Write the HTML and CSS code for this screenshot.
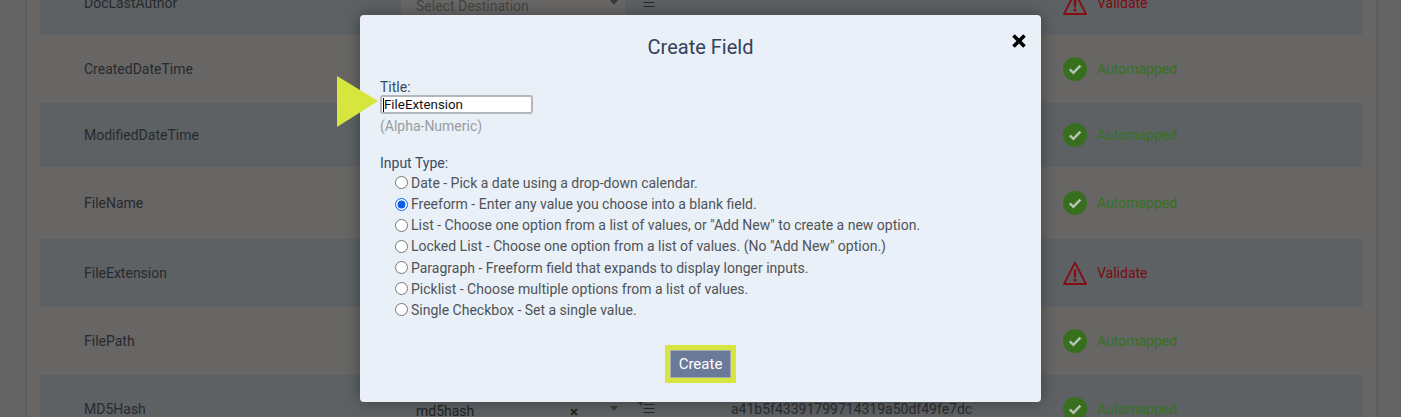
FILE: index.html
```html
<!DOCTYPE html>
<html lang="en">
<head>
  <meta charset="UTF-8">
  <title>Create Field</title>
  <link rel="stylesheet" href="styles.css">
</head>
<body>
  <svg class="defs" width="0" height="0">
    <symbol id="ok" viewBox="0 0 24 24">
      <circle cx="12" cy="12" r="12" fill="#376f1f"/>
      <path d="M6.800 12.400l3.600 3.400 7-7.200" fill="none" stroke="#b9c4b4" stroke-width="2.400"/>
    </symbol>
    <symbol id="warn" viewBox="0 0 24 24">
      <path d="M12 1.600L1 23h22z" fill="none" stroke="#850c11" stroke-width="1.800" stroke-linejoin="round"/>
      <path d="M10.600 8.500h2.800l-.5 8h-1.800z" fill="#850c11"/>
      <rect x="10.600" y="17.800" width="2.800" height="2.600" fill="#850c11"/>
    </symbol>
    <symbol id="addlist" viewBox="0 0 17 14">
      <path d="M0 3h5M2.500 .5v5M5.500 4.500h11M5.500 8.500h11M5.500 12.500h11" fill="none" stroke="#26292c" stroke-width="1.200"/>
    </symbol>
  </svg>

  <div class="panel">
    <div class="row tint row-first">
      <div class="name">DocLastAuthor</div>
      <div class="dest empty">Select Destination<span class="arrow"></span></div>
      <div class="value"><svg class="addlist"><use href="#addlist"/></svg></div>
      <div class="status bad"><svg class="status-icon"><use href="#warn"/></svg>Validate</div>
    </div>
    <div class="row r68">
      <div class="name">CreatedDateTime</div>
      <div class="dest"></div>
      <div class="value"></div>
      <div class="status good"><svg class="status-icon"><use href="#ok"/></svg>Automapped</div>
    </div>
    <div class="row tint r64">
      <div class="name">ModifiedDateTime</div>
      <div class="dest"></div>
      <div class="value"></div>
      <div class="status good"><svg class="status-icon"><use href="#ok"/></svg>Automapped</div>
    </div>
    <div class="row r72">
      <div class="name">FileName</div>
      <div class="dest"></div>
      <div class="value"></div>
      <div class="status good"><svg class="status-icon"><use href="#ok"/></svg>Automapped</div>
    </div>
    <div class="row tint r68">
      <div class="name">FileExtension</div>
      <div class="dest"></div>
      <div class="value"></div>
      <div class="status bad"><svg class="status-icon"><use href="#warn"/></svg>Validate</div>
    </div>
    <div class="row r68">
      <div class="name">FilePath</div>
      <div class="dest"></div>
      <div class="value"></div>
      <div class="status good"><svg class="status-icon"><use href="#ok"/></svg>Automapped</div>
    </div>
    <div class="row tint r68">
      <div class="name">MD5Hash</div>
      <div class="dest filled">md5hash<span class="clear">×</span><span class="arrow"></span></div>
      <div class="value"><svg class="addlist"><use href="#addlist"/></svg><span class="hash">a41b5f43391799714319a50df49fe7dc</span></div>
      <div class="status good"><svg class="status-icon"><use href="#ok"/></svg>Automapped</div>
    </div>
  </div>

  <div class="modal">
    <svg class="pointer" width="41" height="51" viewBox="0 0 41 51"><polygon points="0,0 41,25 0,51" fill="#d6e63e"/></svg>
    <svg class="close" width="16" height="16" viewBox="0 0 16 16"><path d="M2.500 2.500l11 11M13.500 2.500l-11 11" stroke="#000" stroke-width="3.600"/></svg>
    <h2 class="modal-title">Create Field</h2>
    <label class="field-label" for="title">Title:</label>
    <div class="title-box">
      <input id="title" class="title-input" type="text" value="FileExtension">
    </div>
    <p class="hint">(Alpha-Numeric)</p>
    <p class="field-label type-label">Input Type:</p>
    <div class="types">
      <label class="type"><input type="radio" name="type">Date - Pick a date using a drop-down calendar.</label>
      <label class="type"><input type="radio" name="type" checked>Freeform - Enter any value you choose into a blank field.</label>
      <label class="type"><input type="radio" name="type">List - Choose one option from a list of values, or "Add New" to create a new option.</label>
      <label class="type"><input type="radio" name="type">Locked List - Choose one option from a list of values. (No "Add New" option.)</label>
      <label class="type"><input type="radio" name="type">Paragraph - Freeform field that expands to display longer inputs.</label>
      <label class="type"><input type="radio" name="type">Picklist - Choose multiple options from a list of values.</label>
      <label class="type"><input type="radio" name="type">Single Checkbox - Set a single value.</label>
    </div>
    <div class="actions"><button class="create" type="button">Create</button></div>
  </div>
</body>
</html>
```

FILE: styles.css
```css
/* Page behind the dialog is drawn already dimmed */
html, body {
  height: 417px;
  overflow: hidden;
}

body {
  margin: 0;
  background: #646464;
  font-family: Roboto, "Liberation Sans", sans-serif;
  font-size: 14px;
  color: #27292d;
}

.defs {
  position: absolute;
}

.panel {
  margin: 0 25px 0 27px;
  padding: 0 14px 0 13px;
  height: 417px;
  overflow: hidden;
  background: #676665;
  box-shadow: 0 0 3px rgba(0, 0, 0, 0.2);
}

.row {
  display: grid;
  grid-template-columns: 361px 224px 438px 1fr;
  align-items: center;
}

.tint {
  background: #5d6164;
}

.row-first {
  height: 64px;
  margin-top: -29px;
}

.r64 { height: 64px; }
.r68 { height: 68px; }
.r72 { height: 72px; }

.name {
  padding-left: 44px;
}

.dest {
  position: relative;
  display: flex;
  align-items: center;
  box-sizing: border-box;
  height: 30px;
  padding-left: 15px;
}

.dest.empty {
  padding-top: 6px;
  background: #6a6866;
  color: #444;
}

.dest.filled {
  padding-top: 4px;
  color: #222;
}

.arrow {
  position: absolute;
  right: 7px;
  top: 12px;
  border-left: 4.500px solid transparent;
  border-right: 4.500px solid transparent;
  border-top: 5px solid #3a3a3a;
}

.clear {
  position: absolute;
  left: 169px;
  top: 9px;
  font-size: 15px;
  font-weight: 700;
}

.value {
  display: flex;
  align-items: center;
  height: 30px;
  padding-left: 13px;
}

.addlist {
  width: 17px;
  height: 14px;
  margin-top: -4px;
}

.hash {
  margin-left: 76px;
  color: #2a2c30;
}

.status {
  display: flex;
  align-items: center;
  gap: 10px;
}

.status-icon {
  width: 24px;
  height: 24px;
  flex: none;
}

.good { color: #35721d; }
.bad { color: #7d0a10; }

/* Dialog */
.modal {
  position: absolute;
  left: 360px;
  top: 15px;
  width: 681px;
  height: 387px;
  box-sizing: border-box;
  padding: 0 20px;
  background: #e9f0f7;
  border-radius: 4px;
  box-shadow: 0 0 16px rgba(0, 0, 0, 0.35);
  color: #3b4a63;
}

.pointer {
  position: absolute;
  left: -23px;
  top: 61px;
}

.close {
  position: absolute;
  left: 651px;
  top: 18px;
}

.modal-title {
  margin: 0;
  padding: 21px 0;
  font-size: 20px;
  font-weight: 400;
  line-height: 22px;
  text-align: center;
  color: #33415a;
}

.field-label {
  display: block;
  margin: 0;
  line-height: 16px;
}

.title-box {
  position: relative;
  width: 153px;
}

.title-box::before {
  content: "";
  position: absolute;
  left: 3px;
  top: 3px;
  width: 1px;
  height: 14px;
  background: #000;
}

.title-input {
  display: block;
  box-sizing: border-box;
  width: 153px;
  height: 19px;
  padding: 0 2px;
  border: 2px solid #b4b8bc;
  border-radius: 3px;
  outline: none;
  background: #fff;
  font-family: inherit;
  font-size: 13.330px;
  color: #111;
}

.hint {
  margin: 4px 0 0;
  line-height: 16px;
  color: #9a9da1;
}

.type-label {
  margin-top: 21px;
}

.types {
  margin-top: 1.400px;
  padding-left: 15px;
}

.type {
  display: flex;
  align-items: center;
  height: 21.170px;
  color: #505358;
}

.type input {
  width: 13px;
  height: 13px;
  margin: 0 3px 0 0;
  accent-color: #0b5fe8;
}

.actions {
  display: flex;
  justify-content: center;
  margin-top: 29.400px;
}

.create {
  box-sizing: border-box;
  width: 61px;
  height: 28px;
  padding: 0;
  border: 1px solid #a8acb0;
  outline: 5px solid #d6e63e;
  background: #6b7a99;
  color: #fff;
  font-family: inherit;
  font-size: 15px;
  font-weight: 400;
}
```
